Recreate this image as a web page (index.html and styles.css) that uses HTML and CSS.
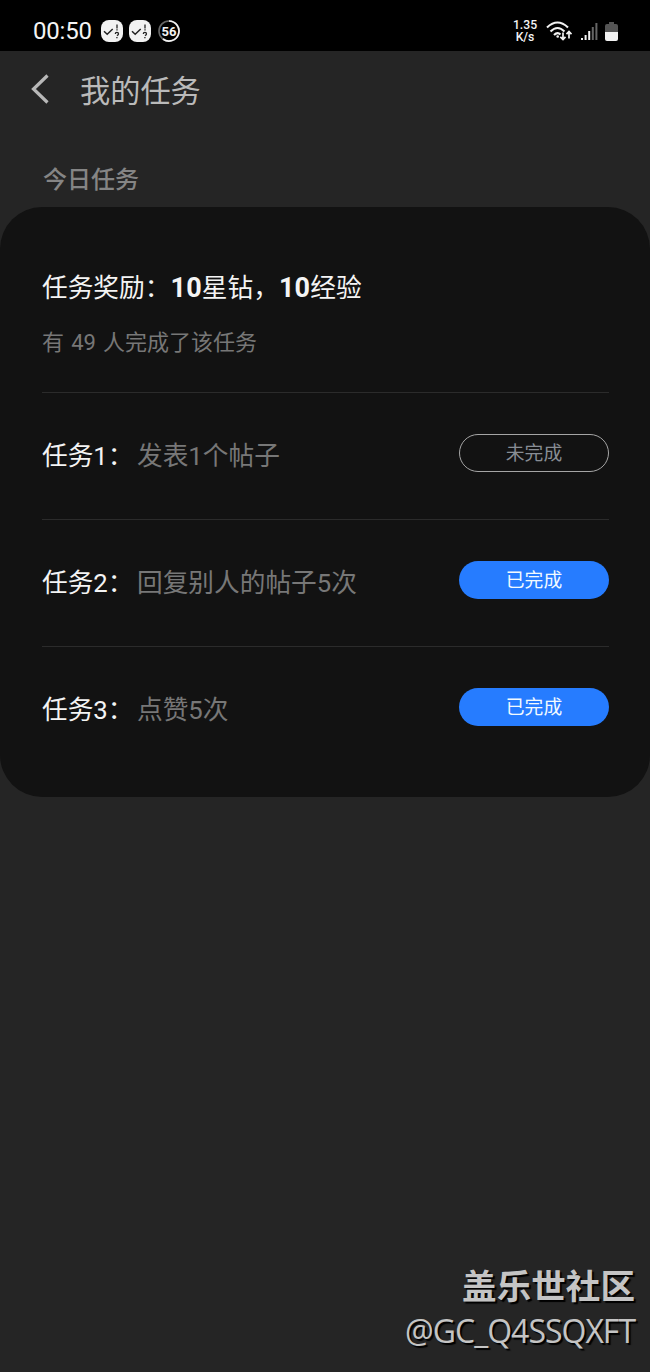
FILE: index.html
```html
<!DOCTYPE html>
<html lang="zh-CN">
<head>
<meta charset="utf-8">
<title>我的任务</title>
<link rel="stylesheet" href="styles.css">
</head>
<body>
<header class="status">
  <span class="clock">00:50</span>
  <svg class="notice" viewBox="0 0 22 22"><rect width="22" height="22" rx="8" fill="#f2f2f2"/><path d="M3 11.2l3.2 3 5.5-5.2" fill="none" stroke="#222" stroke-width="1.5"/><path d="M16 4.5v4M16 9.3v1.2M14.3 14q0-1.7 1.6-1.7T17.5 14q0 1-1.6 1.6M15.9 17v1.3" fill="none" stroke="#222" stroke-width="1.3"/></svg>
  <svg class="notice second" viewBox="0 0 22 22"><rect width="22" height="22" rx="8" fill="#f2f2f2"/><path d="M3 11.2l3.2 3 5.5-5.2" fill="none" stroke="#222" stroke-width="1.5"/><path d="M16 4.5v4M16 9.3v1.2M14.3 14q0-1.7 1.6-1.7T17.5 14q0 1-1.6 1.6M15.9 17v1.3" fill="none" stroke="#222" stroke-width="1.3"/></svg>
  <svg class="counter" viewBox="0 0 22 22"><circle cx="11" cy="11" r="10" fill="none" stroke="#666" stroke-width="1.6"/><path d="M11 1A10 10 0 1 1 5 19" fill="none" stroke="#f2f2f2" stroke-width="1.7"/><text x="11" y="15.7" text-anchor="middle">56</text></svg>
  <div class="speed"><span>1.35</span><span>K/s</span></div>
  <svg class="wifi" viewBox="0 0 26 22"><g fill="none" stroke="#f2f2f2" stroke-width="2.1"><path d="M1 7.5Q11.5-2.5 22 7.5M4.5 11.5Q11.5 4.5 18.5 11.5M8 15Q11.5 11.5 14.5 14.5"/><path d="M17 12.5v7M14.3 16.8l2.7 2.7 2.5-2.7M23 18.5v-7M20.5 14.2l2.5-2.7 2.5 2.7" stroke-width="1.7"/></g><circle cx="11.7" cy="16.5" r="1.3" fill="#f2f2f2"/></svg>
  <svg class="signal" viewBox="0 0 17 18"><path d="M0 15h2v2H0zM3.6 12h2v5h-2zM7.2 8h2v9h-2z" fill="#f2f2f2"/><path d="M10.8 4h2v13h-2zM14.4 0h2v17h-2z" fill="#666"/></svg>
  <svg class="battery" viewBox="0 0 13 20"><path d="M4 0h5v2h2q2 0 2 2v6H0V4q0-2 2-2h2z" fill="#555"/><path d="M0 10h13v7q0 2-2 2H2q-2 0-2-2z" fill="#f2f2f2"/></svg>
</header>
<nav class="titlebar">
  <svg class="back" viewBox="0 0 18 30"><path d="M16.5 1.5L2.5 15l14 13.5" fill="none" stroke="#b8b8b8" stroke-width="3.2"/></svg>
  <h1 class="title">我的任务</h1>
</nav>
<h2 class="section">今日任务</h2>
<main class="card">
  <section class="summary">
    <p class="reward">任务奖励：<b>10</b>星钻，<b>10</b>经验</p>
    <p class="people">有 49 人完成了该任务</p>
  </section>
  <div class="task"><span class="label">任务1：</span><span class="desc">发表1个帖子</span><span class="pill open">未完成</span></div>
  <div class="task"><span class="label">任务2：</span><span class="desc">回复别人的帖子5次</span><span class="pill done">已完成</span></div>
  <div class="task"><span class="label">任务3：</span><span class="desc">点赞5次</span><span class="pill done">已完成</span></div>
</main>
<footer class="watermark">
  <div class="site">盖乐世社区</div>
  <div class="user">@GC_Q4SSQXFT</div>
</footer>
</body>
</html>
```
FILE: styles.css
```css
* { box-sizing: border-box; }
body {
  margin: 0;
  height: 1372px;
  display: flex;
  flex-direction: column;
  background: #252525;
  color: #f4f4f4;
  font-family: Roboto, "Noto Sans CJK SC", sans-serif;
}
h1, h2, p { margin: 0; font-weight: 400; }
.status {
  height: 51px;
  flex: none;
  display: flex;
  align-items: center;
  padding: 11px 32px 0 33px;
  background: #000;
}
.clock { width: 68px; font-size: 24px; line-height: 30px; letter-spacing: -0.2px; white-space: nowrap; }
.notice { width: 22px; height: 22px; flex: none; }
.second { margin-left: 6px; }
.counter { width: 22px; height: 22px; margin-left: 7px; }
.counter text { font-size: 13px; font-weight: 700; fill: #f2f2f2; }
.speed { display: flex; flex-direction: column; align-items: center; margin-left: auto; width: 26px; font-size: 12.2px; line-height: 12px; font-weight: 500; }
.wifi { width: 26px; height: 22px; margin-left: 8px; }
.signal { width: 17px; height: 18px; margin: 2px 0 0 9px; }
.battery { width: 13px; height: 20px; margin: 1px 0 0 7px; }
.titlebar { height: 77px; flex: none; display: flex; align-items: center; padding-left: 31px; }
.back { width: 18px; height: 30px; margin-bottom: 2px; }
.title { margin: 5px 0 0 31px; font-size: 30.2px; line-height: 40px; color: #bababa; }
.section { height: 79px; flex: none; padding: 34px 0 0 43px; font-size: 24px; line-height: 36px; font-weight: 500; color: #858585; }
.card { height: 590px; flex: none; padding: 0 41px 0 42px; border-radius: 42px; background: #121212; }
.summary { height: 185px; padding-top: 62px; }
.reward { font-size: 25.7px; line-height: 38px; white-space: nowrap; }
.reward b { font-size: 27px; letter-spacing: 0.2px; }
.people { margin-top: 20px; font-size: 22px; line-height: 32px; word-spacing: 1.7px; color: #777; }
.task { height: 127px; display: flex; align-items: center; border-top: 1.5px solid #2b2b2b; font-size: 25.7px; line-height: 38px; }
.label { width: 95px; white-space: nowrap; }
.desc { color: #777; }
.pill { width: 150px; height: 38px; margin: 0 0 7px auto; border-radius: 19px; font-size: 18.8px; line-height: 40px; text-align: center; }
.open { border: 1.5px solid #a5a5a5; color: #888d94; line-height: 38px; }
.done { background: #267cff; color: #f2faff; }
.watermark { margin-top: auto; height: 112px; padding-right: 15px; text-align: right; color: #c4c4c4; text-shadow: 2px 2px 1px #000; }
.site { font-size: 34.6px; line-height: 54px; font-weight: 700; }
.user { font: 32px/34px "Open Sans", sans-serif; letter-spacing: -1px; }
```
